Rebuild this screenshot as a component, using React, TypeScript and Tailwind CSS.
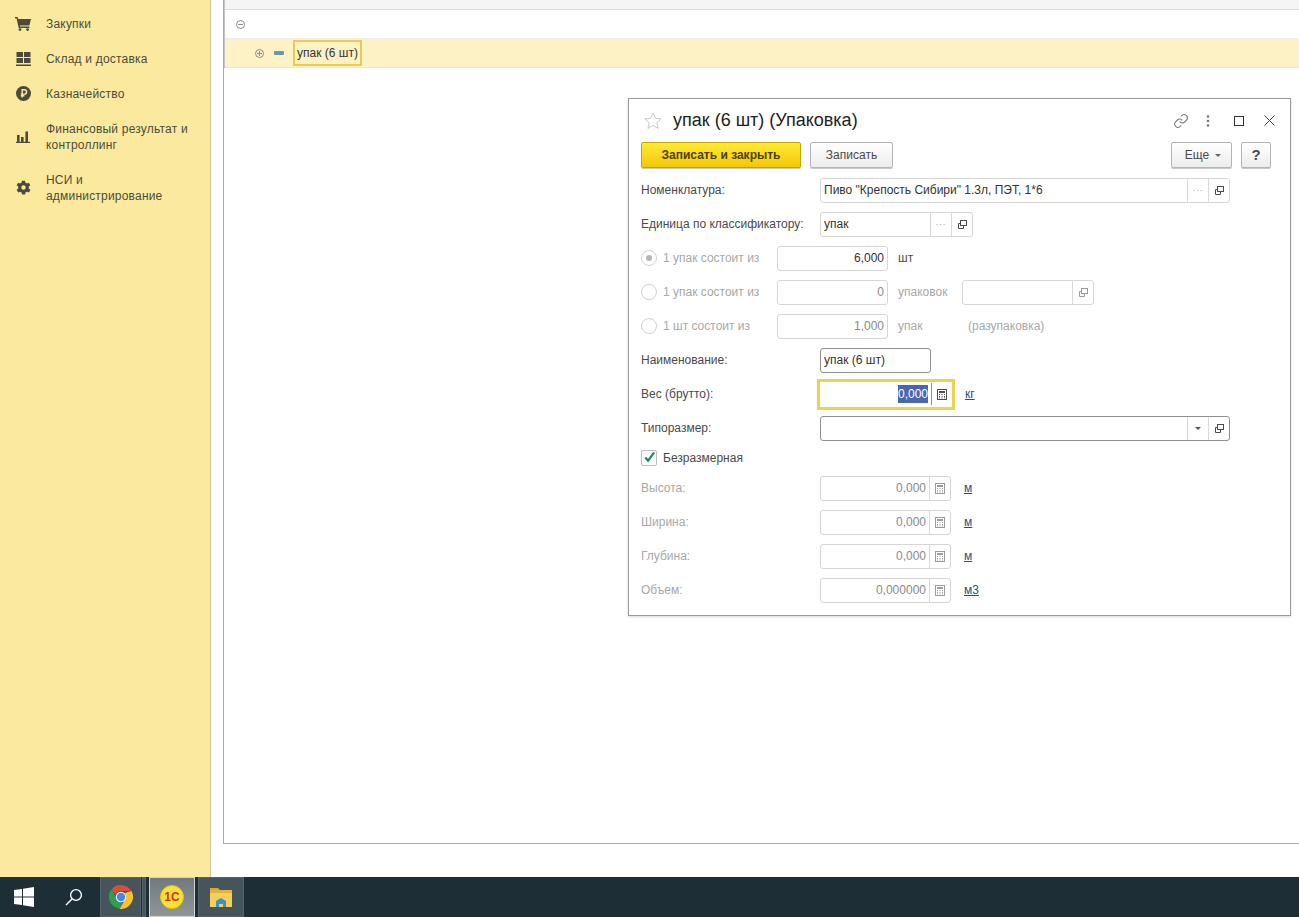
import type { ReactNode } from "react";

function CopyIcon({ muted }: { muted?: boolean }) {
  return (
    <svg width="11" height="11" viewBox="0 0 11 11" fill="none" stroke={muted ? "#9a9a9a" : "#4a4a4a"} strokeWidth="1">
      <rect x="3.5" y="1.5" width="6" height="5" fill="#fff" />
      <path d="M3.5 4.5H1.5V9.5H6.5V6.5" />
    </svg>
  );
}

function CalcIcon({ muted }: { muted?: boolean }) {
  const c = muted ? "#9c9c9c" : "#4f4f4f";
  return (
    <svg width="10" height="11" viewBox="0 0 10 11" fill="none">
      <rect x="0.5" y="0.5" width="9" height="10" stroke={c} />
      <rect x="2" y="2" width="6" height="2" fill={c} />
      <path d="M2 5.5h1M4.5 5.5h1M7 5.5h1M2 7.5h1M4.5 7.5h1M7 7.5h1M2 9h1M4.5 9h1M7 9h1" stroke={c} />
    </svg>
  );
}

function Addon({ children }: { children: ReactNode }) {
  return <div className="flex h-full w-[21px] shrink-0 items-center justify-center border-l border-[#d9d9d9]">{children}</div>;
}

function Dots() {
  return <span className="relative -top-[1px] text-[9px] tracking-[1px] text-[#a0a0a0]">...</span>;
}

type BoxProps = {
  width: string;
  children?: ReactNode;
  dark?: boolean;
};

function Box({ width, children, dark }: BoxProps) {
  return (
    <div className={`flex h-[25px] shrink-0 items-center rounded-[3px] border bg-white ${dark ? "border-[#8f8f8f]" : "border-[#d6d6d6]"} ${width}`}>
      {children}
    </div>
  );
}

function Row({ children, className = "h-[34px]" }: { children: ReactNode; className?: string }) {
  return <div className={`flex items-center ${className}`}>{children}</div>;
}

function Label({ children, muted }: { children: ReactNode; muted?: boolean }) {
  return <div className={`w-[179px] shrink-0 ${muted ? "text-[#a8a8a8]" : "text-[#4a4a4a]"}`}>{children}</div>;
}

function Radio({ on }: { on?: boolean }) {
  return (
    <span className="mr-[6px] flex h-[16px] w-[16px] shrink-0 items-center justify-center rounded-full border border-[#d0d0d0] bg-white">
      {on && <span className="h-[6px] w-[6px] rounded-full bg-[#b5b5b5]" />}
    </span>
  );
}

function PackRow({ label, value, dark, children }: { label: string; value: string; dark?: boolean; children: ReactNode }) {
  return (
    <Row>
      <Radio on={dark} />
      <div className="w-[114px] shrink-0 text-[#a8a8a8]">{label}</div>
      <Box width="w-[111px]">
        <span className={`w-full pr-[3px] text-right ${dark ? "text-[#333]" : "text-[#8a8a8a]"}`}>{value}</span>
      </Box>
      {children}
    </Row>
  );
}

function SizeRow({ label, value, unit }: { label: string; value: string; unit: string }) {
  return (
    <Row>
      <Label muted>{label}</Label>
      <Box width="w-[131px]">
        <span className="flex-1 pr-[3px] text-right text-[#8a8a8a]">{value}</span>
        <Addon>
          <CalcIcon muted />
        </Addon>
      </Box>
      <a className="ml-[13px] text-[#23527f] underline">{unit}</a>
    </Row>
  );
}

function NavItem({ icon, children, tall }: { icon: ReactNode; children: ReactNode; tall?: boolean }) {
  return (
    <div className={`flex items-center ${tall ? "h-[51px]" : "h-[35px]"}`}>
      <div className="flex w-[46px] shrink-0 justify-center pr-[0px]">{icon}</div>
      <div className="leading-[16px] tracking-[0.2px] text-[#4b4a3c]">{children}</div>
    </div>
  );
}

const navIconColor = "#4b4a3c";

function Sidebar() {
  return (
    <aside className="w-[211px] shrink-0 border-r border-[#cfc79c] bg-[#fbea9e] pt-[6px]">
      <NavItem
        icon={
          <svg width="16" height="14" viewBox="0 0 16 14" fill={navIconColor}>
            <path d="M0 0h2.6l.6 2H16l-1.6 6.4H4.6l.3 1.2H14.4V11H3.7L1.6 1.4H0z" />
            <circle cx="5" cy="12.6" r="1.4" />
            <circle cx="12.6" cy="12.6" r="1.4" />
          </svg>
        }
      >
        Закупки
      </NavItem>
      <NavItem
        icon={
          <svg width="15" height="14" viewBox="0 0 15 14" fill={navIconColor}>
            <rect x="0.5" y="0" width="6.5" height="5" />
            <rect x="8" y="0" width="6.5" height="5" />
            <rect x="0.5" y="6" width="6.5" height="5" />
            <rect x="8" y="6" width="6.5" height="5" />
            <rect x="0" y="12.5" width="15" height="1.5" />
          </svg>
        }
      >
        Склад и доставка
      </NavItem>
      <NavItem
        icon={
          <svg width="15" height="15" viewBox="0 0 15 15">
            <circle cx="7.5" cy="7.5" r="7.5" fill={navIconColor} />
            <path d="M6.2 11.5V3.8h2.2a2 2 0 0 1 0 4.3H4.8M4.8 9.7h3.6" fill="none" stroke="#fbea9e" strokeWidth="1.4" />
          </svg>
        }
      >
        Казначейство
      </NavItem>
      <NavItem
        tall
        icon={
          <svg width="14" height="12" viewBox="0 0 14 12" fill={navIconColor}>
            <rect x="1" y="4" width="2.6" height="7" />
            <rect x="5" y="6" width="2.6" height="5" />
            <rect x="9.4" y="0.5" width="2.6" height="10.5" />
            <rect x="0" y="10.8" width="14" height="1.2" />
          </svg>
        }
      >
        Финансовый результат и
        <br />
        контроллинг
      </NavItem>
      <NavItem
        tall
        icon={
          <svg width="15" height="15" viewBox="0 0 24 24" fill={navIconColor}>
            <path d="M19.4 13.5a7.6 7.6 0 0 0 0-3l2.6-2-2.5-4.3-3 1.2a7.6 7.6 0 0 0-2.6-1.5L13.4 1h-5l-.5 2.9a7.6 7.6 0 0 0-2.6 1.5l-3-1.2L0 8.5l2.6 2a7.6 7.6 0 0 0 0 3L0 15.5l2.5 4.3 3-1.2a7.6 7.6 0 0 0 2.6 1.5l.5 2.9h5l.5-2.9a7.6 7.6 0 0 0 2.6-1.5l3 1.2 2.5-4.3zM11 15.5a3.5 3.5 0 1 1 0-7 3.5 3.5 0 0 1 0 7z" transform="translate(1 0)" />
          </svg>
        }
      >
        НСИ и
        <br />
        администрирование
      </NavItem>
    </aside>
  );
}

function TreeToggle({ plus }: { plus?: boolean }) {
  return (
    <svg width="9" height="9" viewBox="0 0 9 9" fill="none" stroke="#8c8c8c">
      <circle cx="4.5" cy="4.5" r="4" />
      <path d="M2 4.5h5" />
      {plus && <path d="M4.5 2v5" />}
    </svg>
  );
}

function TreeMark() {
  return <span className="h-[4px] w-[10px] rounded-[1px] bg-[#6e93ad]" />;
}

function PackTree() {
  return (
    <div className="h-[68px] border-l border-[#c4c4c4]">
      <div className="h-[10px] border-b border-[#dcdcdc] bg-[#f5f5f5]" />
      <div className="flex h-[29px] items-center border-b border-[#efefef] pl-[11px] text-[#4a4a4a]">
        <TreeToggle />
        <span className="ml-[10px]">
          <TreeMark />
        </span>
      </div>
      <div className="flex h-[29px] items-center border-b border-[#eee7c8] bg-[#fdf2c6] pl-[30px]">
        <TreeToggle plus />
        <span className="ml-[10px] mr-[9px] flex">
          <TreeMark />
        </span>
        <span className="flex h-[26px] items-center border-2 border-[#eccb45] px-[2px] text-[#333]">упак (6 шт)</span>
      </div>
    </div>
  );
}

function Button({ children, className = "" }: { children: ReactNode; className?: string }) {
  return (
    <button className={`flex h-[26px] items-center justify-center rounded-[2px] border border-[#b4b4b4] bg-gradient-to-b from-white to-[#ececec] text-[#4a4a4a] shadow-[0_1px_0_#c8c8c8] ${className}`}>
      {children}
    </button>
  );
}

function PackDialog() {
  return (
    <div className="absolute left-[628px] top-[98px] h-[518px] w-[663px] border border-[#9a9a9a] bg-white px-[12px] shadow-[0_1px_3px_rgba(0,0,0,0.15)]">
      <div className="flex h-[43px] items-center">
        <svg width="18" height="18" viewBox="0 0 18 18" fill="#fff" stroke="#c9c9c9" className="mr-[11px] ml-[3px]">
          <path d="M9 1l2.4 5.3 5.8.6-4.4 3.8 1.3 5.7L9 13.4l-5.1 3 1.3-5.7L.8 6.9l5.8-.6z" />
        </svg>
        <div className="text-[18px] text-[#222]">упак (6 шт) (Упаковка)</div>
        <div className="ml-auto flex items-center">
          <svg width="16" height="16" viewBox="0 0 24 24" fill="none" stroke="#7a7a7a" strokeWidth="1.6" className="mr-[17px]">
            <path d="M10 13a5 5 0 0 0 7.5.5l3-3a5 5 0 0 0-7-7l-1.7 1.7" />
            <path d="M14 11a5 5 0 0 0-7.5-.5l-3 3a5 5 0 0 0 7 7l1.7-1.7" />
          </svg>
          <svg width="4" height="12" viewBox="0 0 4 12" fill="#777" className="mr-[24px]">
            <circle cx="2" cy="1.5" r="1.3" />
            <circle cx="2" cy="6" r="1.3" />
            <circle cx="2" cy="10.5" r="1.3" />
          </svg>
          <span className="mr-[20px] h-[10px] w-[10px] border-[1.5px] border-[#333]" />
          <svg width="11" height="11" viewBox="0 0 11 11" stroke="#444" className="mr-[3px]">
            <path d="M.5.5l10 10M10.5.5l-10 10" />
          </svg>
        </div>
      </div>

      <div className="flex h-[26px] items-center">
        <button className="flex h-[26px] w-[160px] items-center justify-center rounded-[2px] border border-[#c4a500] bg-gradient-to-b from-[#ffe933] to-[#f4c800] font-bold text-[#4a3f0a] shadow-[0_1px_0_#c8c8c8]">
          Записать и закрыть
        </button>
        <Button className="ml-[9px] w-[83px]">Записать</Button>
        <Button className="ml-auto w-[61px] pl-[3px]">
          Еще
          <span className="ml-[6px] mt-[1px] h-0 w-0 border-x-[3px] border-t-[3px] border-x-transparent border-t-[#666]" />
        </Button>
        <Button className="ml-[9px] mr-[7px] w-[30px] text-[15px] font-bold">?</Button>
      </div>

      <div className="pt-[5px]">
        <Row>
          <Label>Номенклатура:</Label>
          <Box width="w-[410px]">
            <span className="flex-1 pl-[3px] text-[#333]">Пиво "Крепость Сибири" 1.3л, ПЭТ, 1*6</span>
            <Addon>
              <Dots />
            </Addon>
            <Addon>
              <CopyIcon />
            </Addon>
          </Box>
        </Row>
        <Row>
          <Label>Единица по классификатору:</Label>
          <Box width="w-[153px]">
            <span className="flex-1 pl-[3px] text-[#333]">упак</span>
            <Addon>
              <Dots />
            </Addon>
            <Addon>
              <CopyIcon />
            </Addon>
          </Box>
        </Row>
        <PackRow label="1 упак состоит из" value="6,000" dark>
          <span className="ml-[10px] text-[#4a4a4a]">шт</span>
        </PackRow>
        <PackRow label="1 упак состоит из" value="0">
          <span className="ml-[10px] w-[64px] text-[#a8a8a8]">упаковок</span>
          <Box width="w-[132px]">
            <span className="flex-1" />
            <Addon>
              <CopyIcon muted />
            </Addon>
          </Box>
        </PackRow>
        <PackRow label="1 шт состоит из" value="1,000">
          <span className="ml-[10px] w-[70px] text-[#a8a8a8]">упак</span>
          <span className="text-[#a8a8a8]">(разупаковка)</span>
        </PackRow>
        <Row>
          <Label>Наименование:</Label>
          <Box width="w-[111px]" dark>
            <span className="pl-[3px] text-[#333]">упак (6 шт)</span>
          </Box>
        </Row>
        <Row>
          <Label>Вес (брутто):</Label>
          <div className="-ml-[3px] flex h-[31px] w-[138px] shrink-0 items-center border-[3px] border-[#ecd34e] bg-white">
            <span className="flex flex-1 justify-end pr-[3px]">
              <span className="bg-[#4a66ac] text-white">0,000</span>
            </span>
            <div className="flex h-[22px] w-[21px] shrink-0 items-center justify-center border-l border-[#8f8f8f]">
              <CalcIcon />
            </div>
          </div>
          <a className="ml-[10px] text-[#23527f] underline">кг</a>
        </Row>
        <Row>
          <Label>Типоразмер:</Label>
          <Box width="w-[410px]" dark>
            <span className="flex-1" />
            <Addon>
              <span className="h-0 w-0 border-x-[3px] border-t-[3px] border-x-transparent border-t-[#555]" />
            </Addon>
            <Addon>
              <CopyIcon />
            </Addon>
          </Box>
        </Row>
        <Row className="h-[26px]">
          <span className="mr-[6px] flex h-[16px] w-[16px] shrink-0 items-center justify-center rounded-[2px] border border-[#bdbdbd] bg-white">
            <svg width="14" height="14" viewBox="0 0 14 14" fill="none" stroke="#1f8a5b" strokeWidth="2.4" className="-mt-[3px] ml-[1px]">
              <path d="M2.5 7.5l3 3.5L12 2" />
            </svg>
          </span>
          <span className="text-[#4a4a4a]">Безразмерная</span>
        </Row>
        <SizeRow label="Высота:" value="0,000" unit="м" />
        <SizeRow label="Ширина:" value="0,000" unit="м" />
        <SizeRow label="Глубина:" value="0,000" unit="м" />
        <SizeRow label="Объем:" value="0,000000" unit="м3" />
      </div>
    </div>
  );
}

function TaskButton({ children, className = "" }: { children: ReactNode; className?: string }) {
  return <div className={`flex h-[40px] items-center justify-center border ${className}`}>{children}</div>;
}

function Taskbar() {
  return (
    <footer className="flex h-[40px] shrink-0 items-center bg-[#1d2e37]">
      <div className="flex w-[48px] justify-center">
        <svg width="20" height="20" viewBox="0 0 20 20" fill="#fff">
          <path d="M0 3l8-1.1V9.5H0zM9 1.7L20 0v9.5H9zM0 10.5h8v7.6L0 17zM9 10.5h11V20L9 18.3z" />
        </svg>
      </div>
      <div className="flex w-[52px] justify-center">
        <svg width="18" height="18" viewBox="0 0 18 18" fill="none" stroke="#fff" strokeWidth="1.4">
          <circle cx="11" cy="7" r="5.4" />
          <path d="M7 11l-6 6" />
        </svg>
      </div>
      <TaskButton className="w-[41px] border-[#55636a] bg-[#46545b]">
        <svg width="24" height="24" viewBox="0 0 24 24">
          <path d="M12 0a12 12 0 0 1 10.4 6H12a6 6 0 0 0-5.6 3.8L2.6 4.2A12 12 0 0 1 12 0z" fill="#dd4b39" />
          <path d="M2.6 4.2l5 8.8a6 6 0 0 0 6 4.800l-3 5.900A12 12 0 0 1 2.600 4.200z" fill="#2e9e4f" />
          <path d="M22.400 6A12 12 0 0 1 10.600 23.900l5-8.900A6 6 0 0 0 16 8z" fill="#fbc02d" />
          <circle cx="12" cy="12" r="5.200" fill="#fff" />
          <circle cx="12" cy="12" r="4.200" fill="#4285f4" />
        </svg>
      </TaskButton>
      <div className="ml-[1px] h-[40px] w-[4px] border border-[#55636a] bg-[#46545b]" />
      <TaskButton className="ml-[3px] w-[46px] border-[#cfd4d6] bg-gradient-to-b from-[#6f7a7f] to-[#8f9699]">
        <span className="flex h-[24px] w-[24px] items-center justify-center rounded-full border border-[#e2c400] bg-[#f9e13b] text-[12px] font-bold text-[#d5301c]">
          1С
        </span>
      </TaskButton>
      <TaskButton className="ml-[3px] w-[46px] border-[#55636a] bg-[#46545b]">
        <svg width="24" height="20" viewBox="0 0 24 20">
          <path d="M1 1h8l2 2h-10z" fill="#e0a526" />
          <rect x="1" y="3" width="22" height="17" fill="#f6cf5a" />
          <rect x="1" y="3" width="22" height="3" fill="#e7b23a" />
          <path d="M7 20v-6l5-3 5 3v6h-3v-3h-4v3z" fill="#3f8fcb" />
        </svg>
      </TaskButton>
    </footer>
  );
}

export default function App() {
  return (
    <div className="relative flex h-[917px] w-[1299px] flex-col overflow-hidden bg-white font-['Liberation_Sans',Arial,sans-serif] text-[12px]">
      <div className="flex min-h-0 flex-1">
        <Sidebar />
        <main className="flex-1 pl-[12px] pb-[33px]">
          <div className="h-full border-b border-l border-[#a8a8a8]">
            <PackTree />
          </div>
        </main>
      </div>
      <Taskbar />
      <PackDialog />
    </div>
  );
}
